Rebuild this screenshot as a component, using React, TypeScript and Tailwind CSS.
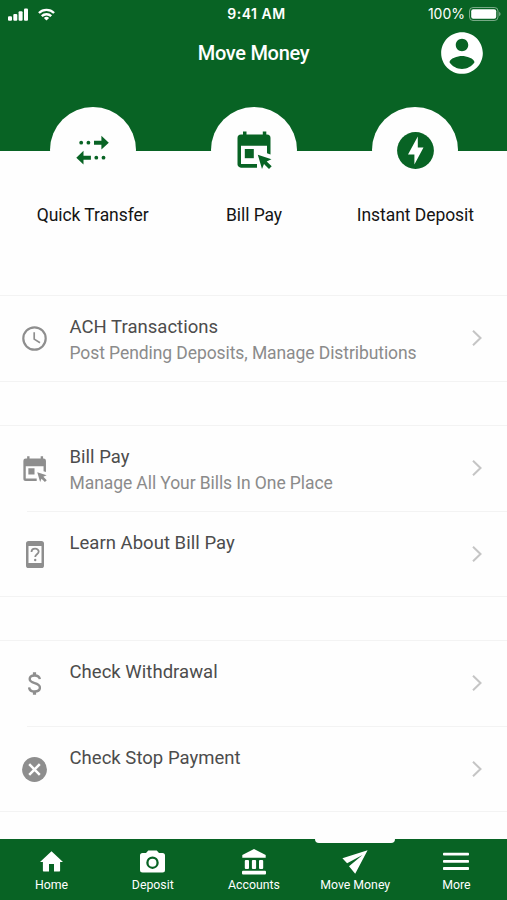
import React from "react";

type IconProps = { className?: string };

function Signal() {
  return (
    <svg className="w-5 h-[13px]" viewBox="0 0 20 13" fill="currentColor">
      <rect x="0" y="8.2" width="4" height="4.6" rx="1.1" />
      <rect x="5.3" y="6" width="4" height="6.8" rx="1.1" />
      <rect x="10.6" y="3.2" width="4" height="9.6" rx="1.1" />
      <rect x="16" y="0.5" width="4" height="12.3" rx="1.1" />
    </svg>
  );
}

function Wifi() {
  return (
    <svg className="w-[17px] h-[13px]" viewBox="0 0 18 13" fill="none" stroke="currentColor" strokeWidth="2.5">
      <path d="M1 4.9a11.4 11.4 0 0 1 16 0" />
      <path d="M4 8.200a7.2 7.2 0 0 1 10 0" />
      <path d="M9 12.800L6.200 10.200a3.900 3.900 0 0 1 5.600 0z" fill="currentColor" stroke="none" />
    </svg>
  );
}

function Battery() {
  return (
    <svg className="w-8 h-[14px]" viewBox="0 0 32 14">
      <rect x="0.5" y="0.5" width="28.5" height="13" rx="3.5" fill="none" stroke="#fff" strokeOpacity="0.45" />
      <rect x="2.2" y="2.2" width="25" height="9.6" rx="2" fill="#fff" />
      <path d="M30.2 4.8c1.8.7 1.8 3.7 0 4.4z" fill="#fff" fillOpacity="0.5" />
    </svg>
  );
}

function Account() {
  return (
    <svg className="size-[50px]" viewBox="0 0 24 24" fill="currentColor">
      <path d="M12 2C6.48 2 2 6.48 2 12s4.48 10 10 10 10-4.48 10-10S17.52 2 12 2zm0 3.2c1.66 0 3 1.34 3 3s-1.34 3-3 3-3-1.34-3-3 1.34-3 3-3zm0 14.5c-2.500 0-4.71-1.28-6-3.22.03-1.99 4-3.08 6-3.08 1.990 0 5.970 1.090 6 3.080-1.290 1.940-3.500 3.220-6 3.220z" />
    </svg>
  );
}

function Transfer() {
  return (
    <svg className="w-[33px] h-[30px]" viewBox="0 0 33 30" fill="currentColor">
      <circle cx="5.2" cy="7.700" r="1.900" />
      <circle cx="12.4" cy="7.700" r="1.900" />
      <path d="M18 5.700h7.400V.8L32.800 7.700l-7.400 6.900V9.700H18z" />
      <circle cx="27.500" cy="22.700" r="1.900" />
      <circle cx="20.300" cy="22.700" r="1.900" />
      <path d="M14.900 20.700H7.500v-4.900L.3 22.700l7.200 6.900v-4.900h7.400z" />
    </svg>
  );
}

function CalendarClick({ className }: IconProps) {
  return (
    <svg className={className} viewBox="0 0 35 38" fill="currentColor">
      <path d="M6 .5h3.500v3h16.300v-3h3.500v3h.7a3.500 3.500 0 0 1 3.500 3.500v16.500l-3.500-1.300V14.800H4V33h16v3.700H4A3.500 3.500 0 0 1 .5 33V7A3.500 3.500 0 0 1 4 3.500h2z" />
      <path d="M7.800 18h9v9.200h-9z" />
      <path d="M20.800 23.800l13.700 4.500-4.800 2.200 5 4.800-2.700 2.700-5-4.900-2 4.800z" />
    </svg>
  );
}

function Bolt() {
  return (
    <svg className="size-[37px]" viewBox="0 0 37 37">
      <circle cx="18.500" cy="18.500" r="18.400" fill="currentColor" />
      <path d="M20.800 4.600L11 22.500h6.400v9.900l9.100-17h-5.700z" fill="#fff" />
    </svg>
  );
}

function Clock() {
  return (
    <svg className="size-[25px]" viewBox="0 0 25 25" fill="none" stroke="currentColor">
      <circle cx="12.500" cy="12.500" r="11.200" strokeWidth="2.200" />
      <path d="M12.200 6.200v6.900l5.800 3.600" strokeWidth="1.700" />
    </svg>
  );
}

function DeviceHelp() {
  return (
    <svg className="w-[18px] h-[27px]" viewBox="0 0 18 27">
      <path
        fill="currentColor"
        fillRule="evenodd"
        d="M2.600 0h12.800A2.600 2.600 0 0 1 18 2.600v21.800a2.600 2.600 0 0 1-2.600 2.600H2.600A2.600 2.600 0 0 1 0 24.400V2.600A2.600 2.600 0 0 1 2.600 0zM2.500 5v17h13V5z"
      />
      <path d="M5.500 11c0-4.400 7.200-4.300 7.200-.4 0 2.600-3.500 2.800-3.500 5.400" fill="none" stroke="currentColor" strokeWidth="1.800" />
      <circle cx="9.200" cy="19" r="1.200" fill="currentColor" />
    </svg>
  );
}

function Dollar() {
  return (
    <svg className="w-[13px] h-[23px]" viewBox="0 0 13 23" fill="none" stroke="currentColor">
      <path d="M11.800 7.200C11.500 4.600 9.500 3.500 6.600 3.500 3.600 3.500 1.700 4.900 1.700 7c0 5.500 10.200 2.700 10.200 8.600 0 2.500-2.200 3.900-5.200 3.900-3.300 0-5.400-1.400-5.600-4.200" strokeWidth="2.400" />
      <path d="M6.500.3v3.500M6.500 19.200v3.500" strokeWidth="3.200" />
    </svg>
  );
}

function CancelCircle() {
  return (
    <svg className="size-[25px]" viewBox="0 0 25 25">
      <circle cx="12.500" cy="12.500" r="12.400" fill="currentColor" />
      <path d="M7.200 7.200l10.600 10.600M17.800 7.200L7.200 17.800" stroke="#fff" strokeWidth="2.500" />
    </svg>
  );
}

function Chevron() {
  return (
    <svg className="mb-px w-[10px] h-[16px] text-[#c5c5c5]" viewBox="0 0 10 16" fill="none" stroke="currentColor" strokeWidth="2">
      <path d="M1 .8L8.500 8 1 15.200" />
    </svg>
  );
}

function Home() {
  return (
    <svg className="w-[23px] h-[21px]" viewBox="0 0 23 21" fill="currentColor">
      <path d="M11.500.3L23 11h-2.900v8.600c0 .6-.4 1-1 1H14v-7.700H9v7.700H3.900c-.6 0-1-.4-1-1V11H0z" />
    </svg>
  );
}

function Camera() {
  return (
    <svg className="w-[25px] h-[23px]" viewBox="0 0 25 23">
      <path d="M8.300.4h8.400l2.300 2.500h3.500A2.500 2.500 0 0 1 25 5.400v14.700a2.500 2.500 0 0 1-2.500 2.500h-20A2.500 2.500 0 0 1 0 20.100V5.400a2.500 2.500 0 0 1 2.500-2.500H6z" fill="currentColor" />
      <circle cx="12.500" cy="12.700" r="5.100" fill="none" stroke="#086324" strokeWidth="2.300" />
    </svg>
  );
}

function Bank() {
  return (
    <svg className="w-6 h-[26px]" viewBox="0 0 24 26" fill="currentColor">
      <path d="M12 0l11.700 6v2.800H.3V6z" />
      <rect x="2.800" y="11" width="4.200" height="8.900" rx="1" />
      <rect x="9.900" y="11" width="4.200" height="8.900" rx="1" />
      <rect x="17" y="11" width="4.200" height="8.900" rx="1" />
      <rect x="0" y="21.800" width="24" height="3.700" rx="1" />
    </svg>
  );
}

function Plane() {
  return (
    <svg className="w-[26px] h-[24px]" viewBox="0 0 26 24" fill="currentColor">
      <path d="M25.600.2L.4 8.300 5.100 13.300 20.500 4.900 7 16.300 13.200 23.800z" />
    </svg>
  );
}

function Menu() {
  return (
    <svg className="w-[26px] h-[19px]" viewBox="0 0 26 19" fill="currentColor">
      <rect y="0.700" width="26" height="2.900" rx="0.800" />
      <rect y="7.900" width="26" height="2.900" rx="0.800" />
      <rect y="15.100" width="26" height="2.900" rx="0.800" />
    </svg>
  );
}

const actions = [
  { label: "Quick Transfer", icon: <Transfer /> },
  { label: "Bill Pay", icon: <CalendarClick className="ml-px w-[35px] h-[38px]" /> },
  { label: "Instant Deposit", icon: <Bolt /> },
];

type Item = { title: string; detail?: string; icon: React.ReactNode };

const sections: Item[][] = [
  [{ title: "ACH Transactions", detail: "Post Pending Deposits, Manage Distributions", icon: <Clock /> }],
  [
    { title: "Bill Pay", detail: "Manage All Your Bills In One Place", icon: <CalendarClick className="w-[24px] h-[26px]" /> },
    { title: "Learn About Bill Pay", icon: <DeviceHelp /> },
  ],
  [
    { title: "Check Withdrawal", icon: <Dollar /> },
    { title: "Check Stop Payment", icon: <CancelCircle /> },
  ],
];

const tabs = [
  { label: "Home", icon: <Home /> },
  { label: "Deposit", icon: <Camera /> },
  { label: "Accounts", icon: <Bank /> },
  { label: "Move Money", icon: <Plane />, active: true },
  { label: "More", icon: <Menu /> },
];

export default function App() {
  return (
    <div className="flex h-[900px] w-[507px] flex-col overflow-hidden bg-[#fefefe] font-['Roboto',sans-serif]">
      <header className="h-[151px] shrink-0 bg-[#086324] text-white">
        <div className="grid h-7 grid-cols-3 items-center pr-[6px] pl-2">
          <div className="flex items-center gap-[10px]">
            <Signal />
            <Wifi />
          </div>
          <span className="pl-1 text-center font-['Inter',sans-serif] text-[14px] leading-7 font-semibold tracking-[0.5px] whitespace-nowrap">9:41 AM</span>
          <div className="flex items-center justify-end gap-1">
            <span className="font-['Inter',sans-serif] text-[14px] leading-7">100%</span>
            <Battery />
          </div>
        </div>
        <div className="grid h-12 grid-cols-[1fr_auto_1fr] items-center pr-5 pl-5">
          <span />
          <h1 className="text-[20px] leading-6 font-medium tracking-[-0.3px] whitespace-nowrap">Move Money</h1>
          <div className="flex justify-end">
            <Account />
          </div>
        </div>
      </header>

      <div className="-mt-[44px] grid h-[188px] shrink-0 grid-cols-3 pr-[11px] pl-3">
        {actions.map((a) => (
          <div key={a.label} className="flex flex-col items-center">
            <div className="flex size-[86px] items-center justify-center rounded-full bg-[#fefefe] text-[#086324]">{a.icon}</div>
            <span className="mt-[12px] text-[17.500px] leading-5 tracking-[-0.05px] whitespace-nowrap text-[#141414]">{a.label}</span>
          </div>
        ))}
      </div>

      <main className="flex flex-1 flex-col gap-[43px]">
        {sections.map((items, s) => (
          <section key={s} className="border-y border-[#f3f3f3]">
            {items.map((item, i) => (
              <div key={item.title}>
                {i > 0 && <div className="ml-[27px] h-px bg-[#f3f3f3]" />}
                <div className={i > 0 ? "flex h-[84px] items-center pr-[25px]" : "flex h-[85px] items-center pr-[25px]"}>
                  <div className="flex w-[69.500px] shrink-0 justify-center text-[#8e8e8e]">{item.icon}</div>
                  <div className="h-[51px] flex-1 whitespace-nowrap">
                    <p className="text-[18.500px] leading-[28px] tracking-[0.03px] text-[#4c4c4c]">{item.title}</p>
                    {item.detail && <p className="text-[17.500px] leading-[25px] tracking-[-0.08px] text-[#8b8b8b]">{item.detail}</p>}
                  </div>
                  <Chevron />
                </div>
              </div>
            ))}
          </section>
        ))}
      </main>

      <nav className="grid h-[61px] shrink-0 grid-cols-5 bg-[#086324] pl-px text-white">
        {tabs.map((t) => (
          <div key={t.label} className="relative flex flex-col items-center">
            {t.active && <div className="absolute top-0 h-1 w-20 rounded-b-[4px] bg-[#fefefe]" />}
            <div className="mt-[9px] flex h-[27px] items-center">{t.icon}</div>
            <span className="mt-[2px] text-[12.300px] leading-4 whitespace-nowrap">{t.label}</span>
          </div>
        ))}
      </nav>
    </div>
  );
}
